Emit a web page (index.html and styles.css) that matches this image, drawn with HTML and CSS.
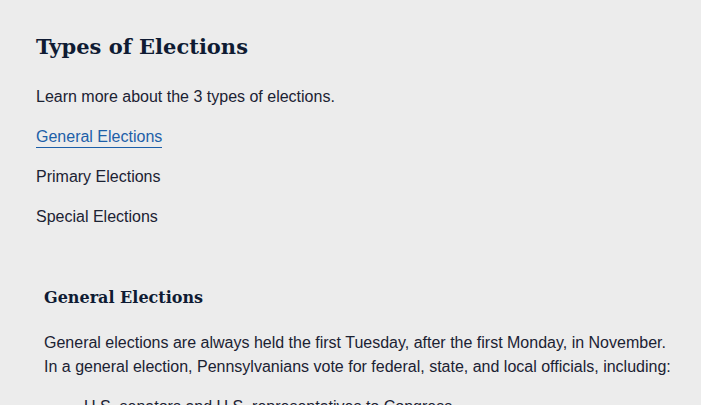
FILE: index.html
```html
<!DOCTYPE html>
<html>
<head>
<meta charset="utf-8">
<link rel="stylesheet" href="styles.css">
</head>
<body>
<main class="page">
  <section class="intro">
    <h1 class="title">Types of Elections</h1>
    <p class="lead">Learn more about the 3 types of elections.</p>
    <ul class="tabs">
      <li><a class="tab active" href="#general">General Elections</a></li>
      <li><span class="tab">Primary Elections</span></li>
      <li><span class="tab">Special Elections</span></li>
    </ul>
  </section>
  <section class="panel" id="general">
    <h2 class="panel-title">General Elections</h2>
    <p class="panel-text">General elections are always held the first Tuesday, after the first Monday, in November. In a general election, Pennsylvanians vote for federal, state, and local officials, including:</p>
    <ul class="panel-list">
      <li>U.S. senators and U.S. representatives to Congress</li>
      <li>Governor and lieutenant governor</li>
    </ul>
  </section>
</main>
</body>
</html>
```
FILE: styles.css
```css
html, body {
  margin: 0;
  padding: 0;
  background: #ececec;
}
body {
  font-family: "Liberation Sans", Arial, sans-serif;
  color: #1b2233;
  font-size: 16px;
}
.page {
  padding: 31px 0 0 36px;
}
.title {
  font-family: "DejaVu Serif", serif;
  font-weight: bold;
  font-size: 21px;
  line-height: 32px;
  color: #0f1b33;
  margin: 0 0 22px 0;
}
.lead {
  margin: 0 0 16px 0;
  line-height: 24px;
}
.tabs {
  list-style: none;
  margin: 0;
  padding: 0;
  display: flex;
  flex-direction: column;
  gap: 16px;
}
.tabs li {
  line-height: 24px;
}
.tab {
  color: #1b2233;
  text-decoration: none;
}
.tab.active {
  color: #1d5fa8;
  padding-bottom: 2px;
  border-bottom: 1px solid #1d5fa8;
}
.panel {
  padding: 57px 0 0 8px;
}
.panel-title {
  font-family: "DejaVu Serif", serif;
  font-weight: bold;
  font-size: 16px;
  line-height: 24px;
  color: #0f1b33;
  margin: 0 0 21px 0;
}
.panel-text {
  margin: 0;
  line-height: 24px;
  max-width: 632px;
}
.panel-list {
  margin: 16px 0 0 0;
  padding-left: 40px;
  list-style: none;
  line-height: 24px;
}
```
